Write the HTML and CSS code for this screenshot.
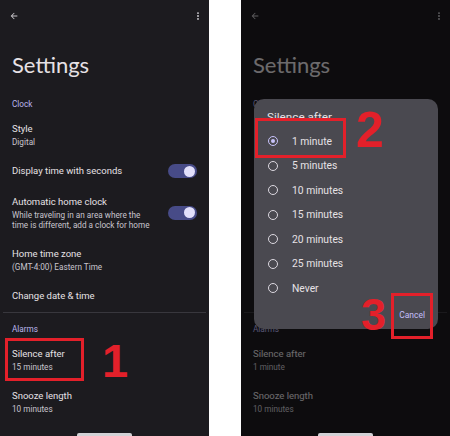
FILE: index.html
```html
<!DOCTYPE html>
<html lang="en">
<head>
<meta charset="utf-8">
<title>Clock settings – Silence after</title>
<link rel="stylesheet" href="styles.css">
</head>
<body>
<div class="sheet">
  <div class="phone">
    <div class="topbar">
      <svg class="back" viewBox="0 0 24 24"><path d="M20 11H7.83l5.59-5.59L12 4l-8 8 8 8 1.41-1.41L7.83 13H20v-2z"/></svg>
      <svg class="more" viewBox="0 0 24 24"><circle cx="12" cy="5" r="2.2"/><circle cx="12" cy="12" r="2.2"/><circle cx="12" cy="19" r="2.2"/></svg>
    </div>
    <h1 class="title">Settings</h1>
    <div class="section">Clock</div>
    <div class="item"><div class="text"><div class="t">Style</div><div class="s">Digital</div></div></div>
    <div class="item"><div class="text"><div class="t">Display time with seconds</div></div><div class="toggle"></div></div>
    <div class="item"><div class="text"><div class="t">Automatic home clock</div><div class="s nowrap">While traveling in an area where the<br>time is different, add a clock for home</div></div><div class="toggle"></div></div>
    <div class="item"><div class="text"><div class="t">Home time zone</div><div class="s">(GMT-4:00) Eastern Time</div></div></div>
    <div class="item"><div class="text"><div class="t">Change date &amp; time</div></div></div>
    <div class="divider"></div>
    <div class="section">Alarms</div>
    <div class="item"><div class="text"><div class="t">Silence after</div><div class="s">15 minutes</div></div></div>
    <div class="item"><div class="text"><div class="t">Snooze length</div><div class="s">10 minutes</div></div></div>
    <div class="homebar"></div>
    <div class="mark m1"></div>
    <div class="num n1">1</div>
  </div>

  <div class="phone">
    <div class="topbar">
      <svg class="back" viewBox="0 0 24 24"><path d="M20 11H7.83l5.59-5.59L12 4l-8 8 8 8 1.41-1.41L7.83 13H20v-2z"/></svg>
      <svg class="more" viewBox="0 0 24 24"><circle cx="12" cy="5" r="2.2"/><circle cx="12" cy="12" r="2.2"/><circle cx="12" cy="19" r="2.2"/></svg>
    </div>
    <h1 class="title">Settings</h1>
    <div class="section">Clock</div>
    <div class="item under"><div class="text"><div class="t">Style</div><div class="s">Digital</div></div></div>
    <div class="item under"><div class="text"><div class="t">Display time with seconds</div></div><div class="toggle"></div></div>
    <div class="item under"><div class="text"><div class="t">Automatic home clock</div><div class="s nowrap">While traveling in an area where the<br>time is different, add a clock for home</div></div><div class="toggle"></div></div>
    <div class="item under"><div class="text"><div class="t">Home time zone</div><div class="s">(GMT-4:00) Eastern Time</div></div></div>
    <div class="item under"><div class="text"><div class="t">Change date &amp; time</div></div></div>
    <div class="divider"></div>
    <div class="section">Alarms</div>
    <div class="item"><div class="text"><div class="t">Silence after</div><div class="s">1 minute</div></div></div>
    <div class="item"><div class="text"><div class="t">Snooze length</div><div class="s">10 minutes</div></div></div>
    <div class="scrim"></div>
    <div class="homebar"></div>

    <div class="dialog">
      <div class="dtitle">Silence after</div>
      <div class="opt"><span class="radio on"></span><span>1 minute</span></div>
      <div class="opt"><span class="radio"></span><span>5 minutes</span></div>
      <div class="opt"><span class="radio"></span><span>10 minutes</span></div>
      <div class="opt"><span class="radio"></span><span>15 minutes</span></div>
      <div class="opt"><span class="radio"></span><span>20 minutes</span></div>
      <div class="opt"><span class="radio"></span><span>25 minutes</span></div>
      <div class="opt"><span class="radio"></span><span>Never</span></div>
      <div class="actions"><span class="cancel">Cancel</span></div>
    </div>

    <div class="mark m2"></div>
    <div class="num n2">2</div>
    <div class="mark m3"></div>
    <div class="num n3">3</div>
  </div>
</div>
</body>
</html>
```

FILE: styles.css
```css
* { box-sizing: border-box; margin: 0; padding: 0; }
html, body { width: 450px; height: 436px; overflow: hidden; background: #ffffff; }
body { font-family: Roboto, "Noto Sans", sans-serif; }

.sheet { display: flex; gap: 32px; height: 436px; }

.phone {
  position: relative;
  width: 209px;
  height: 436px;
  flex: none;
  display: flex;
  flex-direction: column;
  background: #1c1b1f;
  color: #e6e1e5;
  overflow: hidden;
}

.topbar {
  height: 32px;
  flex: none;
  display: flex;
  align-items: center;
  justify-content: space-between;
  padding: 0 6px 0 9px;
}
.back { width: 10px; height: 10px; fill: #c9c7cc; }
.more { width: 10px; height: 10px; fill: #d6d4da; }

.title {
  font-family: Lato, Roboto, sans-serif;
  font-weight: 400;
  font-size: 22px;
  line-height: 26px;
  margin: 20px 0 20px 12px;
  color: #e6e1e5;
}

.section {
  font-size: 8.2px;
  line-height: 12px;
  color: #bab5ec;
  padding-left: 12px;
  margin-bottom: 4px;
}

.item {
  display: flex;
  align-items: center;
  gap: 12px;
  padding: 8px 12px 9px 12px;
}
.item.under .text { visibility: hidden; }
.text { flex: 1; min-width: 0; }
.t { font-size: 9.5px; line-height: 14px; color: #e6e1e5; }
.s { font-size: 8.2px; line-height: 10px; margin-top: 1px; color: #c9c5ce; }
.s.nowrap { white-space: nowrap; }

.toggle {
  position: relative;
  flex: none;
  margin-left: auto;
  width: 29px;
  height: 14px;
  border-radius: 7px;
  background: #474b87;
}
.toggle::after {
  content: "";
  position: absolute;
  right: 2px;
  top: 1.5px;
  width: 11px;
  height: 11px;
  border-radius: 50%;
  background: #e2e0fb;
}

.divider { height: 1px; background: #38373d; margin: 0 3px 10px 3px; flex: none; }

.homebar {
  position: relative;
  z-index: 3;
  margin-top: auto;
  align-self: center;
  width: 55px;
  height: 3px;
  border-radius: 2px 2px 0 0;
  background: #d2d2d6;
  flex: none;
}

.scrim { position: absolute; inset: 0; background: rgba(0, 0, 0, 0.53); z-index: 1; }

.dialog {
  position: absolute;
  z-index: 2;
  left: 13px;
  top: 99px;
  width: 184px;
  height: 230px;
  border-radius: 10px;
  background: #4a4950;
  padding-top: 11px;
  display: flex;
  flex-direction: column;
}
.dtitle {
  font-size: 11.7px;
  line-height: 14px;
  padding-left: 13px;
  margin-bottom: 5px;
  color: #e6e1e5;
}
.opt {
  display: flex;
  align-items: center;
  gap: 14px;
  height: 24.5px;
  padding-left: 14px;
  font-size: 10.3px;
  color: #e6e1e5;
}
.radio {
  position: relative;
  width: 10px;
  height: 10px;
  border-radius: 50%;
  border: 1.3px solid #dcd8e0;
  flex: none;
}
.radio.on { border-color: #c8c3fb; }
.radio.on::after {
  content: "";
  position: absolute;
  left: 1.5px;
  top: 1.5px;
  width: 4.4px;
  height: 4.4px;
  border-radius: 50%;
  background: #c8c3fb;
}
.actions {
  margin-top: auto;
  height: 28px;
  display: flex;
  align-items: center;
  justify-content: flex-end;
  padding-right: 13px;
}
.cancel { font-size: 8.5px; font-weight: 400; color: #c3befa; }

.mark { position: absolute; z-index: 5; border: 3px solid #e3202a; }
.m1 { left: 5px; top: 338px; width: 79px; height: 43px; }
.m2 { left: 14px; top: 118px; width: 91px; height: 40px; }
.m3 { left: 150px; top: 293px; width: 42px; height: 46px; }

.num {
  position: absolute;
  z-index: 5;
  font-family: "Liberation Sans", Arial, sans-serif;
  font-weight: 700;
  line-height: 1;
  color: #e3202a;
}
.n1 { left: 102px; top: 337px; font-size: 47px; }
.n2 { left: 115px; top: 105px; font-size: 50px; }
.n3 { left: 120px; top: 292px; font-size: 45px; }
```
